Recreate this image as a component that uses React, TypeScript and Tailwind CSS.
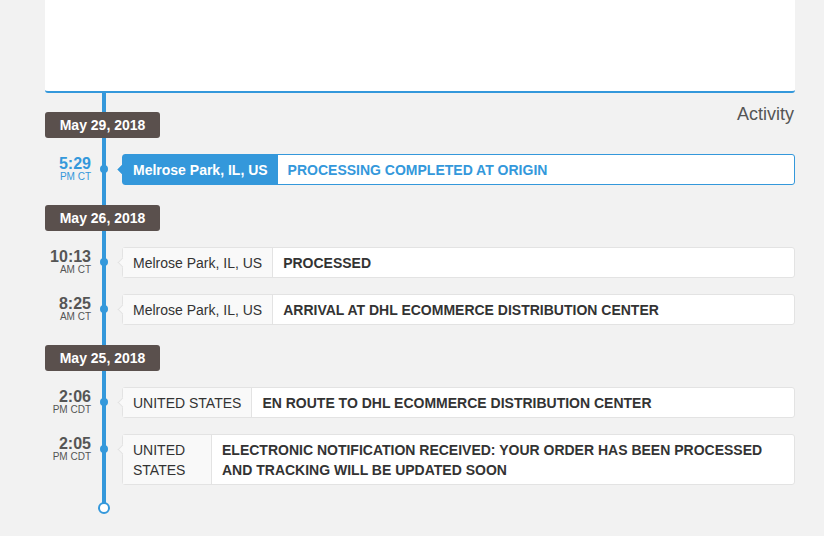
import React from "react";

type Ev = {
  time: string;
  zone: string;
  loc: React.ReactNode;
  locW?: string;
  status: React.ReactNode;
  active?: boolean;
};

type Group = { date: string; events: Ev[] };

const groups: Group[] = [
  {
    date: "May 29, 2018",
    events: [
      {
        time: "5:29",
        zone: "PM CT",
        loc: "Melrose Park, IL, US",
        status: "PROCESSING COMPLETED AT ORIGIN",
        active: true,
      },
    ],
  },
  {
    date: "May 26, 2018",
    events: [
      { time: "10:13", zone: "AM CT", loc: "Melrose Park, IL, US", status: "PROCESSED" },
      {
        time: "8:25",
        zone: "AM CT",
        loc: "Melrose Park, IL, US",
        status: "ARRIVAL AT DHL ECOMMERCE DISTRIBUTION CENTER",
      },
    ],
  },
  {
    date: "May 25, 2018",
    events: [
      {
        time: "2:06",
        zone: "PM CDT",
        loc: "UNITED STATES",
        status: "EN ROUTE TO DHL ECOMMERCE DISTRIBUTION CENTER",
      },
      {
        time: "2:05",
        zone: "PM CDT",
        loc: "UNITED STATES",
        locW: "narrow",
        status:
          "ELECTRONIC NOTIFICATION RECEIVED: YOUR ORDER HAS BEEN PROCESSED AND TRACKING WILL BE UPDATED SOON",
      },
    ],
  },
];

function Badge({ date, className }: { date: string; className: string }) {
  return (
    <div
      className={
        "relative z-10 flex h-[26px] w-[115px] items-center justify-center rounded-[3px] bg-[#5a504d] text-[14px] font-bold text-white " +
        className
      }
    >
      {date}
    </div>
  );
}

function Row({ ev }: { ev: Ev }) {
  const a = !!ev.active;
  return (
    <div className="mt-[16px] flex items-start">
      <div
        className={
          "mt-[2px] w-[46px] flex-none text-right " + (a ? "text-[#3498db]" : "text-[#555555]")
        }
      >
        <div className="text-[16px] font-bold leading-[16px]">{ev.time}</div>
        <div className="text-[10px] leading-[10px]">{ev.zone}</div>
      </div>
      <div className="relative z-10 ml-[9px] mt-[11px] h-[8px] w-[8px] flex-none rounded-full bg-[#3498db]" />
      <div
        className={
          "relative ml-[14px] flex flex-1 rounded-[3px] border bg-white text-[14px] leading-[20px] " +
          (a ? "border-[#3498db]" : "border-[#e3e3e3]")
        }
      >
        <div
          className={
            "absolute left-[-4px] top-[11px] h-[7px] w-[7px] rotate-45 border-b border-l " +
            (a ? "border-[#3498db] bg-[#3498db]" : "border-[#e3e3e3] bg-[#f9f9f9]")
          }
        />
        <div
          className={
            "flex-none px-[10px] pb-[4px] pt-[5px] " +
            (ev.locW === "narrow" ? "w-[89px] " : "") +
            (a
              ? "bg-[#3498db] font-bold text-white"
              : "border-r border-[#e3e3e3] bg-[#f9f9f9] text-[#333333]")
          }
        >
          {ev.loc}
        </div>
        <div
          className={
            "flex-1 px-[10px] pb-[4px] pt-[5px] font-bold " +
            (a ? "text-[#3498db]" : "text-[#333333]")
          }
        >
          {ev.status}
        </div>
      </div>
    </div>
  );
}

export default function App() {
  return (
    <div className="h-[536px] w-[824px] overflow-hidden bg-[#f2f2f2] font-['Liberation_Sans',Arial,sans-serif]">
      <div className="ml-[45px] w-[750px]">
        <div className="h-[93px] rounded-b-[3px] border-b-2 border-[#3498db] bg-white" />
        <div className="relative">
          <div className="absolute left-[57px] top-0 h-[410px] w-[4px] bg-[#3498db]" />
          {groups.map((g, gi) => (
            <div key={g.date}>
              {gi === 0 ? (
                <div className="flex items-start justify-between">
                  <Badge date={g.date} className="mt-[19px]" />
                  <div className="mt-[10px] pr-[1px] text-[18px] leading-[22px] text-[#555555]">
                    Activity
                  </div>
                </div>
              ) : (
                <Badge date={g.date} className="mt-[20px]" />
              )}
              {g.events.map((ev) => (
                <Row key={ev.time} ev={ev} />
              ))}
            </div>
          ))}
          <div className="relative z-10 ml-[53px] mt-[17px] h-[12px] w-[12px] rounded-full border-2 border-[#3498db] bg-white" />
        </div>
      </div>
    </div>
  );
}
